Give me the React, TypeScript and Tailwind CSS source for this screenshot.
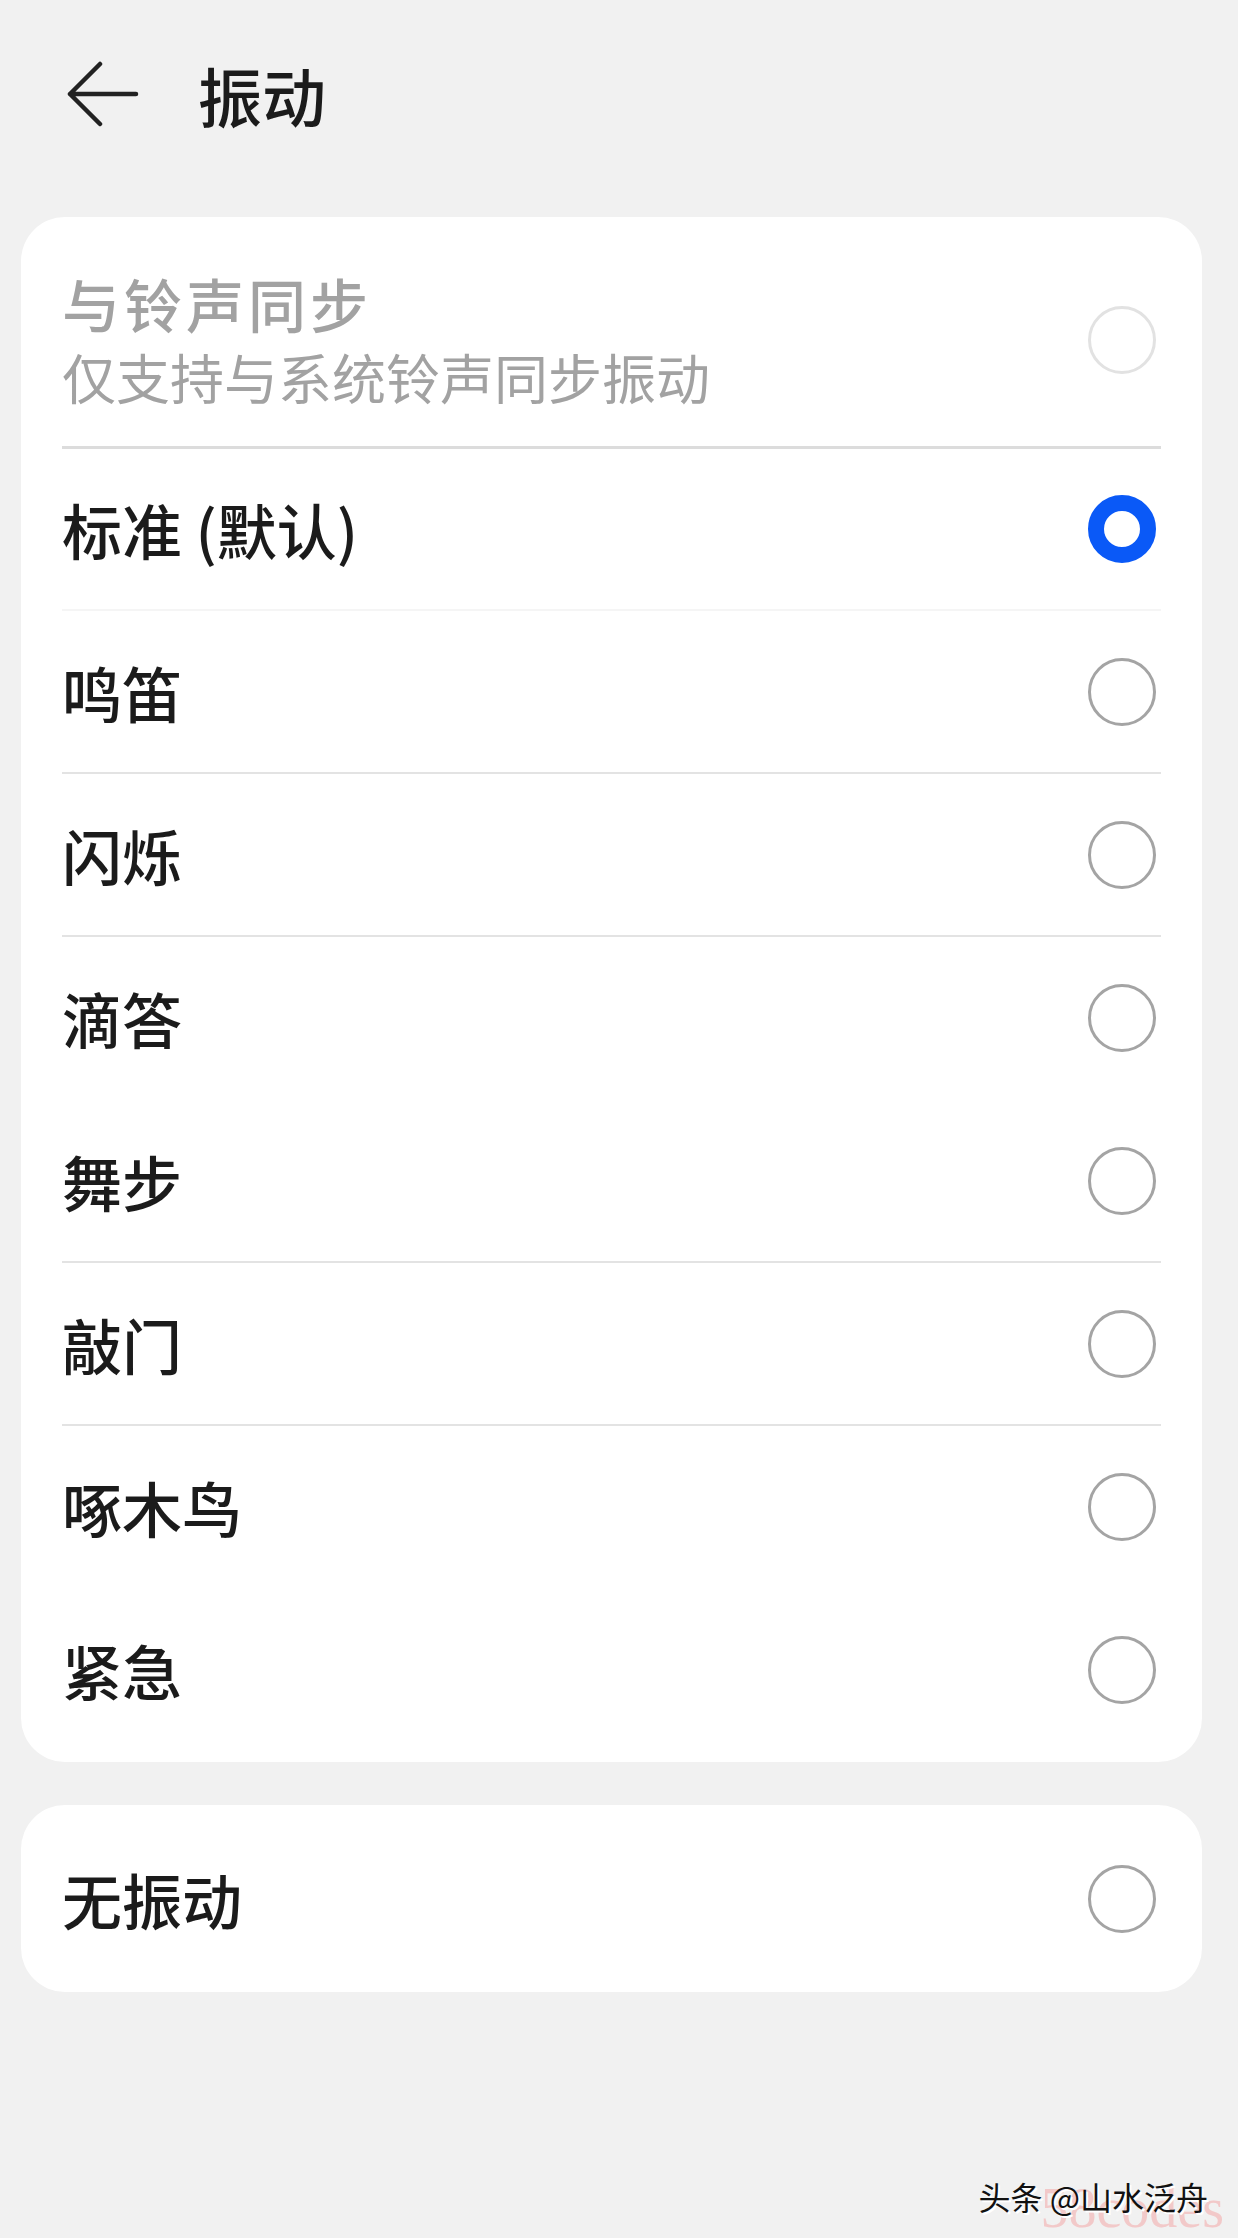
const font = { fontFamily: '"Noto Sans CJK SC", "Noto Sans", sans-serif' };

type Option = { id: number; name: string; top: "none" | "faint" | "solid" | "strong" };

// top = the divider drawn above each row
const options: Option[] = [
  { id: 1, name: "标准 (默认)", top: "strong" },
  { id: 2, name: "鸣笛", top: "faint" },
  { id: 3, name: "闪烁", top: "solid" },
  { id: 4, name: "滴答", top: "solid" },
  { id: 5, name: "舞步", top: "none" },
  { id: 6, name: "敲门", top: "solid" },
  { id: 7, name: "啄木鸟", top: "solid" },
  { id: 8, name: "紧急", top: "none" },
];

const lineClass = {
  none: "border-t-2 border-transparent",
  faint: "border-t-2 border-[#f5f5f5]",
  solid: "border-t-2 border-[#e3e3e3]",
  strong: "border-t-[3px] border-[#dcdcdc]",
};

const Radio = ({ checked, disabled }: { checked?: boolean; disabled?: boolean }) => {
  if (checked) {
    return (
      <div className="mr-[5px] h-[68px] w-[68px] shrink-0 rounded-full border-[16px] border-[#0a59f7] bg-white" />
    );
  }
  return (
    <div
      className={
        disabled
          ? "mr-[5px] h-[68px] w-[68px] shrink-0 rounded-full border-[3px] border-[#e2e2e2]"
          : "mr-[5px] h-[68px] w-[68px] shrink-0 rounded-full border-[3px] border-[#a4a4a4]"
      }
    />
  );
};

export default function App() {
  const selected = 1;

  return (
    <div className="relative min-h-[2238px] w-full bg-[#f1f1f1]" style={font}>
      {/* header */}
      <div className="flex items-center pl-[67px] pt-[61px]">
        <svg width="72" height="66" viewBox="0 0 72 66" fill="none">
          <path
            d="M33 3 L3 33 L33 63 M3 33 H69"
            stroke="#222"
            strokeWidth="4.5"
            strokeLinecap="round"
            strokeLinejoin="round"
          />
        </svg>
        <h1 className="ml-[59px] text-[64px] leading-none font-medium text-[#1b1b1b]">
          振动
        </h1>
      </div>

      {/* main list */}
      <div className="ml-[21px] mr-[36px] mt-[90px] rounded-[44px] bg-white px-[41px] pb-[12px]">
        <div className="flex h-[229px] items-center justify-between pt-4">
          <div className="text-[#a2a2a2]">
            <div className="text-[58px] leading-[58px] tracking-[4px] font-medium">
              与铃声同步
            </div>
            <div className="mt-[17px] text-[54px] leading-[56px]">
              仅支持与系统铃声同步振动
            </div>
          </div>
          <Radio disabled />
        </div>

        {options.map((opt) => (
          <div
            key={opt.id}
            className={`flex h-[163px] items-center justify-between ${lineClass[opt.top]}`}
          >
            <span className="text-[60px] leading-none font-medium text-[#1b1b1b]">
              {opt.name}
            </span>
            <Radio checked={opt.id === selected} />
          </div>
        ))}
      </div>

      {/* no vibration */}
      <div className="ml-[21px] mr-[36px] mt-[43px] flex h-[187px] items-center justify-between rounded-[44px] bg-white px-[41px]">
        <span className="text-[60px] leading-none font-medium text-[#1b1b1b]">无振动</span>
        <Radio />
      </div>

      {/* watermarks */}
      <div
        className="absolute right-[14px] bottom-[2px] text-[56px] leading-none text-[#f2c9c9]"
        style={{ fontFamily: '"Liberation Serif", serif' }}
      >
        58codes
      </div>
      <div className="absolute right-[30px] bottom-[26px] text-[32px] leading-none text-[#111] [text-shadow:2px_2px_0_#fff]">
        头条 @山水泛舟
      </div>
    </div>
  );
}
